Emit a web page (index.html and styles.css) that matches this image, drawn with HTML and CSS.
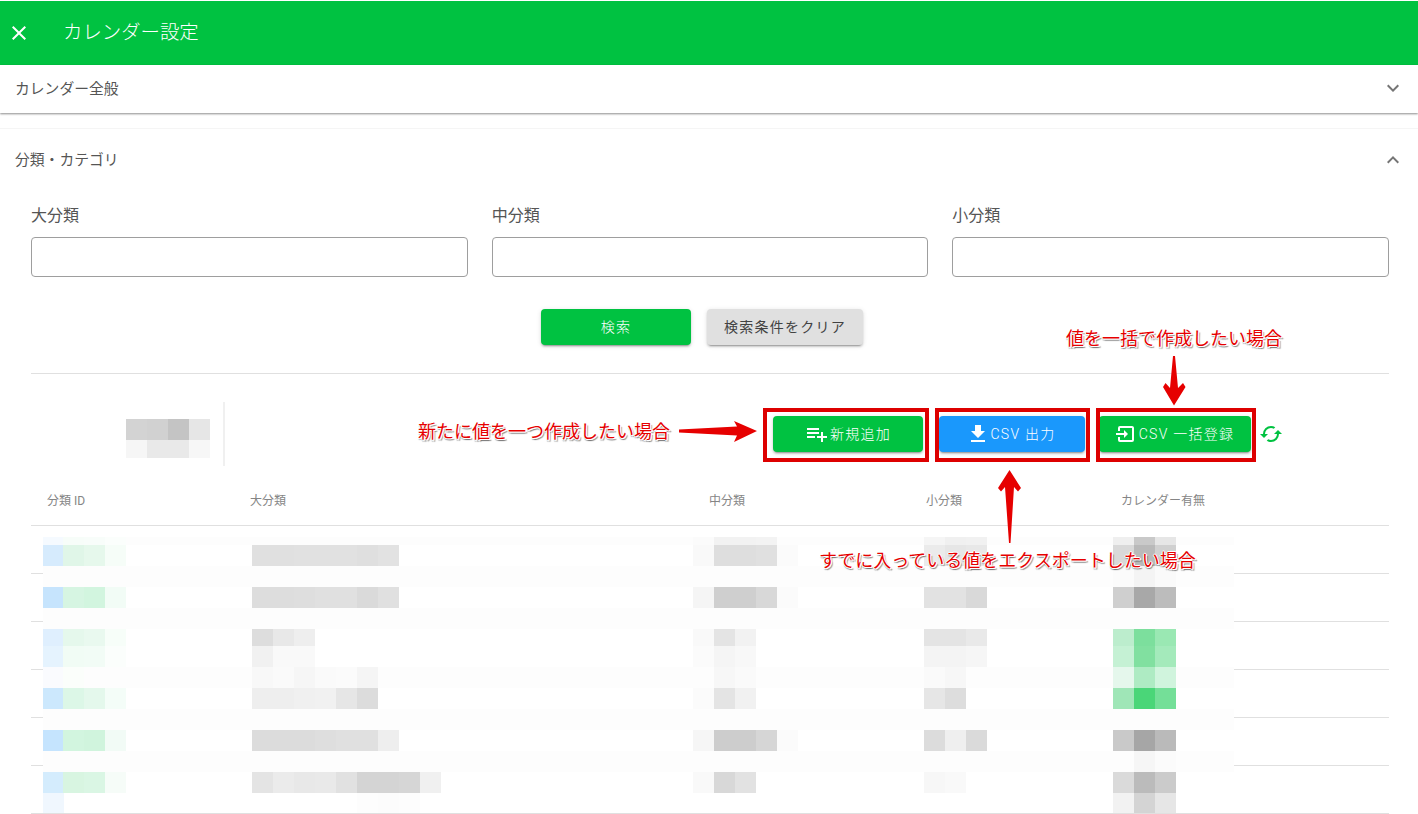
FILE: index.html
```html
<!DOCTYPE html>
<html lang="ja">
<head>
<meta charset="utf-8">
<title>カレンダー設定</title>
<link rel="stylesheet" href="styles.css">
</head>
<body>
<div class="page">
  <header class="appbar">
    <svg class="close" viewBox="0 0 24 24"><path d="M19,6.41L17.59,5L12,10.59L6.41,5L5,6.41L10.59,12L5,17.59L6.41,19L12,13.41L17.59,19L19,17.59L13.41,12L19,6.41Z"/></svg>
    <h1 class="apptitle">カレンダー設定</h1>
  </header>

  <section class="panel collapsed">
    <div class="panel-head">
      <span class="panel-title">カレンダー全般</span>
      <svg class="chev" viewBox="0 0 24 24"><path d="M7.41,8.58L12,13.17L16.59,8.58L18,10L12,16L6,10L7.41,8.58Z"/></svg>
    </div>
  </section>

  <section class="panel open">
    <div class="panel-head tall">
      <span class="panel-title">分類・カテゴリ</span>
      <svg class="chev" viewBox="0 0 24 24"><path d="M7.41,15.41L12,10.83L16.59,15.41L18,14L12,8L6,14L7.41,15.41Z"/></svg>
    </div>
    <div class="panel-body">
      <div class="fields">
        <label class="field"><span class="field-label">大分類</span><input class="input" type="text"></label>
        <label class="field"><span class="field-label">中分類</span><input class="input" type="text"></label>
        <label class="field"><span class="field-label">小分類</span><input class="input" type="text"></label>
      </div>
      <div class="search-row">
        <button class="btn green wide">検索</button>
        <button class="btn grey">検索条件をクリア</button>
      </div>
      <hr class="rule">
      <div class="toolbar">
        <div class="toolbar-left">
          <svg class="mosaic-small" viewBox="126 419 84 39" shape-rendering="crispEdges">
            <g class="t21" transform="translate(0 419)"><rect x="126" fill="#d3d3d3"/><rect x="147" fill="#d1d1d1"/><rect x="168" fill="#c4c4c4"/><rect x="189" fill="#e6e6e6"/></g>
            <g class="t18" transform="translate(0 440)"><rect x="126" fill="#f6f6f6"/><rect x="147" fill="#e9e9e9"/><rect x="168" fill="#e9e9e9"/><rect x="189" fill="#f7f7f7"/></g>
          </svg>
        </div>
        <div class="toolbar-actions">
          <button class="btn green add">
            <svg class="ico" viewBox="0 0 24 24"><path d="M2,16H10V14H2M18,14V10H16V14H12V16H16V20H18V16H22V14M14,6H2V8H14M14,10H2V12H14V10Z"/></svg>新規追加
          </button>
          <button class="btn blue csv">
            <svg class="ico" viewBox="0 0 24 24"><path d="M5,20H19V18H5M19,9H15V3H9V9H5L12,16L19,9Z"/></svg>CSV 出力
          </button>
          <button class="btn green bulk">
            <svg class="ico" viewBox="0 0 24 24"><path d="M14,12L10,8V11H2V13H10V16M20,18V6C20,4.89 19.1,4 18,4H6A2,2 0 0,0 4,6V9H6V6H18V18H6V15H4V18A2,2 0 0,0 6,20H18A2,2 0 0,0 20,18Z"/></svg>CSV 一括登録
          </button>
          <svg class="refresh" viewBox="0 0 24 24"><path d="M19,8L15,12H18A6,6 0 0,1 12,18C11,18 10.03,17.75 9.2,17.3L7.74,18.76C8.97,19.54 10.43,20 12,20A8,8 0 0,0 20,12H23M6,12A6,6 0 0,1 12,6C13,6 13.97,6.25 14.8,6.7L16.26,5.24C15.03,4.46 13.57,4 12,4A8,8 0 0,0 4,12H1L5,16L9,12"/></svg>
        </div>
      </div>

      <div class="table">
        <div class="tr th"><div>分類 ID</div><div>大分類</div><div>中分類</div><div>小分類</div><div>カレンダー有無</div></div>
        <div class="tr"></div><div class="tr"></div><div class="tr"></div><div class="tr"></div><div class="tr"></div><div class="tr"></div>

        <svg class="mosaic" viewBox="43 537 1191 276" shape-rendering="crispEdges">
          <g class="t8" transform="translate(0 537)"><rect class="band" x="43" fill="#fdfdfd"/>
            <rect x="43" fill="#f5faff"/><rect x="63" fill="#f7fdf9"/><rect x="84" fill="#f8fdfa"/><rect x="105" fill="#fbfefc"/>
            <rect x="693" fill="#fbfbfb"/><rect x="714" fill="#f2f2f2"/><rect x="735" fill="#f2f2f2"/><rect x="756" fill="#f3f3f3"/>
            <rect x="924" fill="#f5f5f5"/><rect x="945" fill="#f0f0f0"/><rect x="966" fill="#f1f1f1"/>
            <rect x="1113" fill="#efefef"/><rect x="1134" fill="#c9c9c9"/><rect x="1155" fill="#e6e6e6"/></g>
          <g class="t21" transform="translate(0 545)">
            <rect x="43" fill="#d6ebfd"/><rect x="63" fill="#e0f6e8"/><rect x="84" fill="#e6f8ec"/><rect x="105" fill="#f6fdf8"/>
            <rect x="252" fill="#e0e0e0"/><rect x="273" fill="#e0e0e0"/><rect x="294" fill="#e1e1e1"/><rect x="315" fill="#e1e1e1"/><rect x="336" fill="#e1e1e1"/><rect x="357" fill="#dfdfdf"/><rect x="378" fill="#e2e2e2"/>
            <rect x="693" fill="#f9f9f9"/><rect x="714" fill="#dedede"/><rect x="735" fill="#dedede"/><rect x="756" fill="#e0e0e0"/><rect x="777" fill="#fbfbfb"/>
            <rect x="924" fill="#ebebeb"/><rect x="945" fill="#e6e6e6"/><rect x="966" fill="#e8e8e8"/>
            <rect x="1113" fill="#d9d9d9"/><rect x="1134" fill="#b9b9b9"/><rect x="1155" fill="#d0d0d0"/></g>
          <g class="t21" transform="translate(0 566)"><rect class="band" x="43" fill="#fdfdfd"/>
            <rect x="1113" fill="#fbfbfb"/><rect x="1134" fill="#f4f4f4"/><rect x="1155" fill="#fafafa"/></g>
          <g class="t21" transform="translate(0 587)">
            <rect x="43" fill="#c6e4fd"/><rect x="63" fill="#d6f5e2"/><rect x="84" fill="#d2f5df"/><rect x="105" fill="#f2fcf6"/>
            <rect x="252" fill="#dddddd"/><rect x="273" fill="#dddddd"/><rect x="294" fill="#dedede"/><rect x="315" fill="#e0e0e0"/><rect x="336" fill="#e0e0e0"/><rect x="357" fill="#dadada"/><rect x="378" fill="#e0e0e0"/>
            <rect x="693" fill="#f5f5f5"/><rect x="714" fill="#cfcfcf"/><rect x="735" fill="#cfcfcf"/><rect x="756" fill="#d8d8d8"/><rect x="777" fill="#fbfbfb"/>
            <rect x="924" fill="#e2e2e2"/><rect x="945" fill="#e2e2e2"/><rect x="966" fill="#d9d9d9"/>
            <rect x="1113" fill="#cfcfcf"/><rect x="1134" fill="#a8a8a8"/><rect x="1155" fill="#bcbcbc"/></g>
          <g class="t21" transform="translate(0 608)"><rect class="band" x="43" fill="#fdfdfd"/></g>
          <g class="t17" transform="translate(0 629)">
            <rect x="43" fill="#dfeffe"/><rect x="63" fill="#e5f8ec"/><rect x="84" fill="#e9f9ef"/><rect x="105" fill="#f7fef9"/>
            <rect x="252" fill="#dddddd"/><rect x="273" fill="#e8e8e8"/><rect x="294" fill="#eeeeee"/>
            <rect x="693" fill="#f9f9f9"/><rect x="714" fill="#e4e4e4"/><rect x="735" fill="#f2f2f2"/>
            <rect x="924" fill="#e4e4e4"/><rect x="945" fill="#e4e4e4"/><rect x="966" fill="#e9e9e9"/>
            <rect x="1113" fill="#bcedcd"/><rect x="1134" fill="#7cdf9d"/><rect x="1155" fill="#9ae8b3"/></g>
          <g class="t21" transform="translate(0 646)">
            <rect x="43" fill="#e5f3fe"/><rect x="63" fill="#f1fcf5"/><rect x="84" fill="#f2fcf6"/><rect x="105" fill="#fbfefc"/>
            <rect x="252" fill="#f1f1f1"/><rect x="273" fill="#f9f9f9"/><rect x="294" fill="#f9f9f9"/>
            <rect x="693" fill="#fbfbfb"/><rect x="714" fill="#f5f5f5"/><rect x="735" fill="#f8f8f8"/>
            <rect x="924" fill="#f4f4f4"/><rect x="945" fill="#f4f4f4"/><rect x="966" fill="#f6f6f6"/>
            <rect x="1113" fill="#c5f1d4"/><rect x="1134" fill="#81e0a0"/><rect x="1155" fill="#a4eabb"/></g>
          <g class="t21" transform="translate(0 667)"><rect class="band" x="43" fill="#fdfdfd"/>
            <rect x="43" fill="#fafbfe"/><rect x="63" fill="#fbfefb"/>
            <rect x="252" fill="#f8f8f8"/><rect x="273" fill="#fafafa"/><rect x="294" fill="#f6f6f6"/><rect x="315" fill="#fafafa"/><rect x="336" fill="#fbfbfb"/><rect x="357" fill="#f5f5f5"/>
            <rect x="714" fill="#f7f7f7"/><rect x="735" fill="#fafafa"/>
            <rect x="924" fill="#fafafa"/><rect x="945" fill="#f7f7f7"/>
            <rect x="1113" fill="#e5f7ec"/><rect x="1134" fill="#aeebc3"/><rect x="1155" fill="#d0f4dd"/></g>
          <g class="t21" transform="translate(0 688)">
            <rect x="43" fill="#cce8fd"/><rect x="63" fill="#dcf7e7"/><rect x="84" fill="#e4f8ec"/><rect x="105" fill="#f4fdf8"/>
            <rect x="252" fill="#eeeeee"/><rect x="273" fill="#eeeeee"/><rect x="294" fill="#f0f0f0"/><rect x="315" fill="#f1f1f1"/><rect x="336" fill="#e6e6e6"/><rect x="357" fill="#dcdcdc"/>
            <rect x="693" fill="#fbfbfb"/><rect x="714" fill="#e4e4e4"/><rect x="735" fill="#f1f1f1"/>
            <rect x="924" fill="#e6e6e6"/><rect x="945" fill="#dddddd"/>
            <rect x="1113" fill="#9fe6b7"/><rect x="1134" fill="#4ad678"/><rect x="1155" fill="#74df98"/></g>
          <g class="t21" transform="translate(0 709)"><rect class="band" x="43" fill="#fdfdfd"/></g>
          <g class="t21" transform="translate(0 730)">
            <rect x="43" fill="#c5e4fe"/><rect x="63" fill="#d2f5df"/><rect x="84" fill="#d0f4dd"/><rect x="105" fill="#f2fbf6"/>
            <rect x="252" fill="#dcdcdc"/><rect x="273" fill="#dcdcdc"/><rect x="294" fill="#dcdcdc"/><rect x="315" fill="#dedede"/><rect x="336" fill="#e0e0e0"/><rect x="357" fill="#e0e0e0"/><rect x="378" fill="#eeeeee"/>
            <rect x="693" fill="#f6f6f6"/><rect x="714" fill="#cdcdcd"/><rect x="735" fill="#cdcdcd"/><rect x="756" fill="#d6d6d6"/><rect x="777" fill="#fbfbfb"/>
            <rect x="924" fill="#dcdcdc"/><rect x="945" fill="#efefef"/><rect x="966" fill="#dadada"/>
            <rect x="1113" fill="#c9c9c9"/><rect x="1134" fill="#a6a6a6"/><rect x="1155" fill="#bababa"/></g>
          <g class="t21" transform="translate(0 751)"><rect class="band" x="43" fill="#fdfdfd"/>
            <rect x="1134" fill="#f6f6f6"/><rect x="1155" fill="#fbfbfb"/></g>
          <g class="t21" transform="translate(0 772)">
            <rect x="43" fill="#d4ecfd"/><rect x="63" fill="#d8f5e1"/><rect x="84" fill="#daf6e4"/><rect x="105" fill="#f6fcf8"/>
            <rect x="252" fill="#e4e4e4"/><rect x="273" fill="#ebebeb"/><rect x="294" fill="#e8e8e8"/><rect x="315" fill="#e9e9e9"/><rect x="336" fill="#e1e1e1"/><rect x="357" fill="#d4d4d4"/><rect x="378" fill="#d4d4d4"/><rect x="399" fill="#d6d6d6"/><rect x="420" fill="#f0f0f0"/>
            <rect x="693" fill="#f9f9f9"/><rect x="714" fill="#d8d8d8"/><rect x="735" fill="#e2e2e2"/>
            <rect x="924" fill="#f7f7f7"/><rect x="945" fill="#f9f9f9"/>
            <rect x="1113" fill="#dadada"/><rect x="1134" fill="#bbbbbb"/><rect x="1155" fill="#cbcbcb"/></g>
          <g class="t20" transform="translate(0 793)">
            <rect x="43" fill="#f0f7fe"/>
            <rect x="357" fill="#fdfdfd"/><rect x="378" fill="#fcfcfc"/><rect x="399" fill="#fdfdfd"/>
            <rect x="1113" fill="#f2f2f2"/><rect x="1134" fill="#d4d4d4"/><rect x="1155" fill="#e6e6e6"/></g>
        </svg>
      </div>
    </div>
  </section>

  <svg class="marks" viewBox="0 0 1418 814">
    <rect class="box" x="765" y="410" width="162" height="50"/>
    <rect class="box" x="937" y="410" width="151" height="50"/>
    <rect class="box" x="1098" y="410" width="156" height="50"/>
    <path class="arrow" d="M679 429.500L737 426.500L734 421L757 431L734 442L737 435.500L679 432.500Z"/>
    <path class="arrow" d="M1173 356L1175 356L1178 388L1183 383L1185.500 387L1174 405.500L1163 387L1165.500 383L1170 388Z"/>
    <path class="arrow" d="M1009.500 470L1021 488L1018 491.500L1014 487L1010.500 543L1009 543L1005 487L1001 491.500L998 488Z"/>
  </svg>
  <div class="note note-new">新たに値を一つ作成したい場合</div>
  <div class="note note-bulk">値を一括で作成したい場合</div>
  <div class="note note-export">すでに入っている値をエクスポートしたい場合</div>
</div>
</body>
</html>
```
FILE: styles.css
```css
* { box-sizing: border-box; }
html, body { margin: 0; padding: 0; background: #fff; }
body {
  height: 814px;
  overflow: hidden;
  font-family: Roboto, "Noto Sans CJK JP", sans-serif;
  font-weight: 300;
  color: rgba(0, 0, 0, .87);
}
.page { position: relative; width: 1418px; height: 814px; padding-top: 1px; overflow: hidden; }

.appbar {
  height: 64px;
  background: #00c241;
  display: flex;
  align-items: center;
  padding-left: 7px;
  color: #fff;
}
.close { width: 24px; height: 24px; fill: #fff; }
.apptitle { margin: 0 0 0 32px; font-size: 19.4px; font-weight: 300; line-height: 24px; }

.panel { background: #fff; }
.panel.collapsed { box-shadow: 0 1px 2px rgba(0, 0, 0, .45); position: relative; }
.panel.open { margin-top: 15px; border-top: 1px solid #f5f5f5; }
.panel-head {
  height: 48px;
  display: flex;
  align-items: center;
  justify-content: space-between;
  padding: 0 13px 2px 15px;
  font-size: 14.8px;
  font-weight: 400;
  color: #555;
}
.panel-head.tall { height: 63px; }
.panel-title { padding-bottom: 2px; }
.chev { width: 24px; height: 24px; fill: #757575; }

.panel-body { padding: 12px 29px 0 31px; }
.fields { display: grid; grid-template-columns: repeat(3, 1fr); column-gap: 24px; }
.field { display: block; }
.field-label { display: block; font-size: 16px; font-weight: 400; line-height: 24px; margin-bottom: 9px; color: #555; }
.input {
  display: block;
  width: 100%;
  height: 40px;
  border: 1px solid #9e9e9e;
  border-radius: 4px;
  background: #fff;
}

.btn {
  height: 36px;
  border: 0;
  border-radius: 4px;
  font-family: inherit;
  font-size: 14px;
  font-weight: 300;
  letter-spacing: 1.25px;
  display: inline-flex;
  align-items: center;
  justify-content: center;
  padding: 0 0 2px;
  box-shadow: 0 3px 1px -2px rgba(0,0,0,.2), 0 2px 2px 0 rgba(0,0,0,.14), 0 1px 5px 0 rgba(0,0,0,.12);
}
.green { background: #00c241; color: #fff; }
.blue { background: #1a98fc; color: #fff; }
.grey { background: #e0e0e0; color: #424242; font-weight: 400; }

.search-row { display: flex; justify-content: center; margin-top: 32px; }
.search-row .btn { margin-right: 16px; }
.wide { width: 150px; }
.search-row .grey { width: 156px; }

.rule { margin: 28px 0 0; border: 0; border-top: 1px solid #e0e0e0; }

.toolbar { display: flex; align-items: center; height: 64px; margin-top: 28px; }
.toolbar-left {
  width: 194px;
  height: 64px;
  border-right: 2px solid #f0f0f0;
  padding: 17px 0 0 95px;
}
.mosaic-small { display: block; width: 84px; height: 39px; }
.toolbar-actions { display: flex; align-items: center; margin-left: 548px; }
.add { width: 150px; }
.csv { width: 146px; margin-left: 16px; padding-right: 3px; }
.bulk { width: 152px; margin-left: 14px; padding-right: 2px; }
.ico { width: 24px; height: 24px; fill: #fff; flex: none; margin: 2px 1px 0 0; }
.refresh { width: 24px; height: 24px; fill: #00c241; margin-left: 8px; }

.table { position: relative; margin-top: 10px; }
.tr {
  display: grid;
  grid-template-columns: 203px 459px 217px 195px 1fr;
  height: 48px;
  border-bottom: 1px solid #e0e0e0;
}
.th { height: 50px; align-items: center; font-size: 12px; font-weight: 400; color: #858585; }
.th > div { padding: 0 0 3px 16px; }
.mosaic { position: absolute; left: 12px; top: 61px; width: 1191px; height: 276px; }
.mosaic rect { width: 21px; }
.mosaic rect.band { width: 1191px; }
.t8 rect { height: 8px; }
.t17 rect { height: 17px; }
.t18 rect { height: 18px; }
.t20 rect { height: 20px; }
.t21 rect { height: 21px; }
.mosaic-small rect { width: 21px; }

.marks { position: absolute; left: 0; top: 0; width: 1418px; height: 814px; pointer-events: none; }
.box { fill: none; stroke: #dd0000; stroke-width: 4px; }
.arrow { fill: #e60000; }
.note {
  position: absolute;
  font-size: 18px;
  font-weight: 400;
  line-height: 24px;
  white-space: nowrap;
  color: #e60000;
  text-shadow: -1px 0 0 #fff, 1px 0 0 #fff, 0 -1px 0 #fff, 0 1px 0 #fff, 1px 1px 0 #fff, 2px 2px 1px rgba(0, 0, 0, .4), 0 2px 1px rgba(0, 0, 0, .3);
}
.note-new { left: 418px; top: 420px; }
.note-bulk { left: 1066px; top: 327px; }
.note-export { left: 819px; top: 549px; }
```
